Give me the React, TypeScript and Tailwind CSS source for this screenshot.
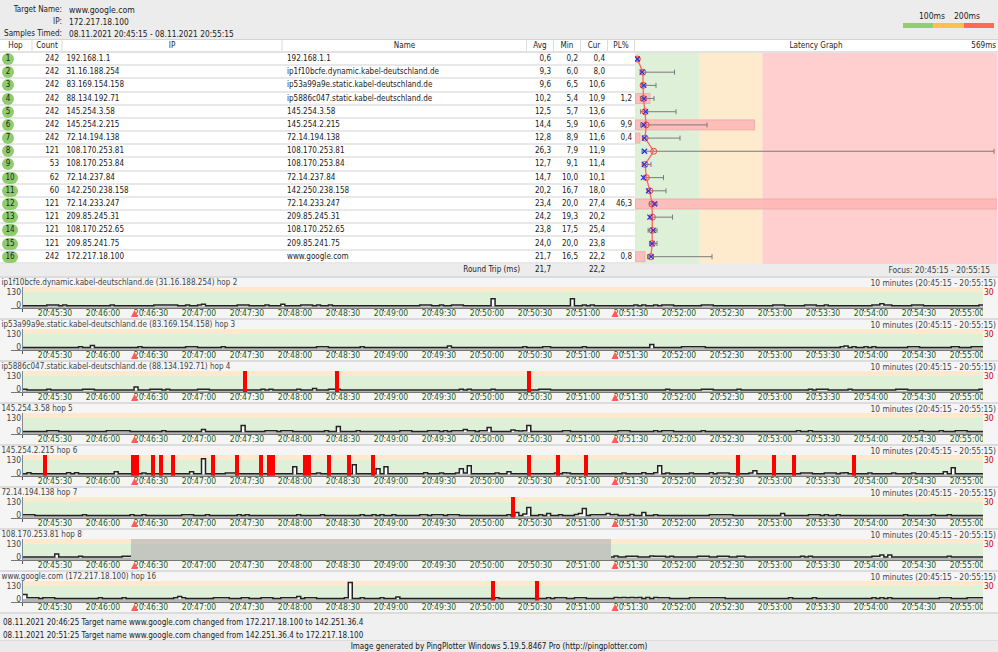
import React from "react";

const hops = [
  [1, 242, "192.168.1.1", "192.168.1.1", "0,6", "0,2", "0,4", "", 0.6, 0.2, 0.4, 639, 0],
  [2, 242, "31.16.188.254", "ip1f10bcfe.dynamic.kabel-deutschland.de", "9,3", "6,0", "8,0", "", 9.3, 6.0, 8.0, 674.5, 0],
  [3, 242, "83.169.154.158", "ip53a99a9e.static.kabel-deutschland.de", "9,6", "6,5", "10,6", "", 9.6, 6.5, 10.6, 656, 0],
  [4, 242, "88.134.192.71", "ip5886c047.static.kabel-deutschland.de", "10,2", "5,4", "10,9", "1,2", 10.2, 5.4, 10.9, 654, 650],
  [5, 242, "145.254.3.58", "145.254.3.58", "12,5", "5,7", "13,6", "", 12.5, 5.7, 13.6, 676, 0],
  [6, 242, "145.254.2.215", "145.254.2.215", "14,4", "5,9", "10,6", "9,9", 14.4, 5.9, 10.6, 707, 754.5],
  [7, 242, "72.14.194.138", "72.14.194.138", "12,8", "8,9", "11,6", "0,4", 12.8, 8.9, 11.6, 680, 640],
  [8, 121, "108.170.253.81", "108.170.253.81", "26,3", "7,9", "11,9", "", 26.3, 7.9, 11.9, 994, 0],
  [9, 53, "108.170.253.84", "108.170.253.84", "12,7", "9,1", "11,4", "", 12.7, 9.1, 11.4, 651, 0],
  [10, 62, "72.14.237.84", "72.14.237.84", "14,7", "10,0", "10,1", "", 14.7, 10.0, 10.1, 663.5, 0],
  [11, 60, "142.250.238.158", "142.250.238.158", "20,2", "16,7", "18,0", "", 20.2, 16.7, 18.0, 666, 0],
  [12, 121, "72.14.233.247", "72.14.233.247", "23,4", "20,0", "27,4", "46,3", 23.4, 20.0, 27.4, 657, 997],
  [13, 121, "209.85.245.31", "209.85.245.31", "24,2", "19,3", "20,2", "", 24.2, 19.3, 20.2, 672.5, 0],
  [14, 121, "108.170.252.65", "108.170.252.65", "23,8", "17,5", "25,4", "", 23.8, 17.5, 25.4, 657, 0],
  [15, 121, "209.85.241.75", "209.85.241.75", "24,0", "20,0", "23,8", "", 24.0, 20.0, 23.8, 657, 0],
  [16, 242, "172.217.18.100", "www.google.com", "21,7", "16,5", "22,2", "0,8", 21.7, 16.5, 22.2, 712, 645],
] as const;

const ROW = 13.18;
const sx = (ms: number) => 2 + ms * 0.636;

function LatencyGraph() {
  const pts = hops.map((h, i) => `${sx(h[8])},${6 + i * ROW}`).join(" ");
  return (
    <svg width="362" height="211" className="block shrink-0">
      <rect x="0" y="0" width="64" height="211" fill="#dff0d8" />
      <rect x="64" y="0" width="63.5" height="211" fill="#feeacc" />
      <rect x="127.5" y="0" width="234.5" height="211" fill="#ffcfcf" />
      {hops.map((h, i) =>
        h[12] ? (
          <rect key={i} x="0.5" y={i * ROW + 1} width={h[12] - 635.5} height="10" fill="#ffb6b6" fillOpacity="0.88" stroke="#eaa9a9" strokeOpacity="0.8" strokeWidth="1" />
        ) : null,
      )}
      {hops.map((h, i) => {
        const y = 6 + i * ROW;
        const min = sx(h[9]);
        const max = h[11] - 635;
        return (
          <g key={i} stroke="#7a7a7a" strokeWidth="1">
            <line x1={min} x2={max} y1={y} y2={y} />
            <line x1={min} x2={min} y1={y - 2.5} y2={y + 2.5} />
            <line x1={max} x2={max} y1={y - 2.5} y2={y + 2.5} />
          </g>
        );
      })}
      <polyline points={pts} fill="none" stroke="#ff6464" strokeWidth="1.3" />
      {hops.map((h, i) => {
        const y = 6 + i * ROW;
        const c = sx(h[10]);
        return (
          <g key={i} fill="none">
            <circle cx={sx(h[8])} cy={y} r="3" stroke="#f04545" strokeWidth="1" />
            <path d={`M${c - 2.5} ${y - 2.5}L${c + 2.5} ${y + 2.5}M${c - 2.5} ${y + 2.5}L${c + 2.5} ${y - 2.5}`} stroke="#2a2ae0" strokeWidth="1.1" />
          </g>
        );
      })}
    </svg>
  );
}

type ChartDef = {
  hop: number;
  title: string;
  base: number;
  red: [number, number][];
  bumps: [number, number][];
  gray?: boolean;
};

const r = (c: number): [number, number] => [c - 2, c + 2];

const charts: ChartDef[] = [
  { hop: 2, title: "ip1f10bcfe.dynamic.kabel-deutschland.de (31.16.188.254) hop 2", base: 18.7, red: [], bumps: [[493, 7], [574, 7], [205, 1.5], [281, 1.5], [882, 2]] },
  { hop: 3, title: "ip53a99a9e.static.kabel-deutschland.de (83.169.154.158) hop 3", base: 18.5, red: [], bumps: [[93, 2], [650, 3], [449, 1.5], [848, 1.5]] },
  { hop: 4, title: "ip5886c047.static.kabel-deutschland.de (88.134.192.71) hop 4", base: 19, red: [r(245), r(337), r(529)], bumps: [[137, 3], [316, 1.5]] },
  { hop: 5, title: "145.254.3.58 hop 5", base: 18.5, red: [], bumps: [[245, 6], [337, 5], [205, 2], [465, 2], [489, 4], [513, 1.5], [529, 6], [521, 0.6]] },
  {
    hop: 6,
    title: "145.254.2.215 hop 6",
    base: 18.7,
    red: [r(45), [131, 139], r(153), r(161), r(173), r(213), r(237), r(261), [267, 275], [303, 311], r(329), r(349), r(373), r(529), r(558), r(586), r(738), r(774), r(794), r(854)],
    bumps: [[117, 2], [28, 1], [68, 1], [77, 1], [193, 2], [203, 15], [293, 7], [353, 9], [377, 5], [385, 7], [461, 5], [470, 8], [425, 1], [509, 2], [565, 1], [642, 1], [655, 1], [661, 8], [710, 1], [753, 3], [845, 1], [945, 2], [954, 6]],
  },
  { hop: 7, title: "72.14.194.138 hop 7", base: 18.5, red: [r(513)], bumps: [[517, 3], [525, 1.5], [529, 8], [549, 2], [575, 1], [580, 2], [586, 7], [609, 2], [617, 1], [633, 1], [645, 3], [784, 2]] },
  { hop: 8, title: "108.170.253.81 hop 8", base: 18, red: [], bumps: [[57, 3], [618, 1], [650, 1], [890, 2], [880, 2]], gray: true },
  { hop: 16, title: "www.google.com (172.217.18.100) hop 16", base: 17.5, red: [r(493), r(537)], bumps: [[25, 4], [349, 16], [180, 2], [297, 2], [396, 1.5], [617, 1], [625, 1], [633, 1], [641, 1], [649, 1], [657, 1]] },
];

const STEP = 960 / 242;

function tracePath(c: ChartDef) {
  const v: number[] = [];
  let s = c.hop * 7919 + 13;
  let run = 0;
  for (let i = 0; i < 242; i++) {
    s = (s * 1103515245 + 12345) & 0x7fffffff;
    if (run > 0) {
      v.push(0.8);
      run--;
    } else if ((s >> 8) % 100 < 13) {
      v.push(0.8);
      run = (s >> 16) % 3 === 0 ? 2 : 0;
    } else {
      v.push(0);
    }
  }
  c.bumps.forEach(([x, h]) => {
    v[Math.floor((x - 23) / STEP)] = h;
  });
  let d = `M0 ${c.base - v[0]}`;
  v.forEach((h, i) => {
    const y = c.base - h;
    d += `V${y}H${((i + 1) * STEP).toFixed(2)}`;
  });
  return d;
}

const labels: string[] = [];
for (let m = 45; m <= 55; m++) {
  if (m > 45) labels.push(`20:${m}:00`);
  if (m < 55) labels.push(`20:${m}:30`);
}

function Chart({ c }: { c: ChartDef }) {
  const d = tracePath(c);
  return (
    <div className="h-[42px] box-border border-b-2 border-[#dcdcdc] bg-[#f5f5f5] text-[#444]">
      <div className="flex h-[9px] justify-between pl-[1.5px] pr-[2px] leading-[10px]">
        <span>{c.title}</span>
        <span className="text-[8.35px]">10 minutes (20:45:15 - 20:55:15)</span>
      </div>
      <div className="flex h-[22px]">
        <div className="w-[23px] pr-[2px] text-right text-[8.5px]">
          <div className="h-[10px] leading-[10px]">130</div>
          <div className="mt-[3px] h-[10px] leading-[10px]">0</div>
        </div>
        <svg width="960" height="22" className="block shrink-0 overflow-visible">
          <rect x="0" y="0" width="960" height="5" fill="#fee9cf" />
          <rect x="0" y="5" width="960" height="17" fill="#dff0d8" />
          <path d={`${d}V${c.base + 1}H0Z`} fill="#fdfdfd" />
          <rect x="0" y={c.base + 0.5} width="960" height={21 - c.base - 0.5} fill="#b5b5b5" />
          <path d={d} fill="none" stroke="#222" strokeWidth="1.5" />
          {c.red.map(([a, b], i) => (
            <rect key={i} x={a - 23} y="0" width={b - a} height={c.base + 2} fill="#ff0000" />
          ))}
          {c.gray && (
            <>
              <rect x="108" y="0" width="480" height="5" fill="#cfc8bf" />
              <rect x="108" y="5" width="480" height="16.5" fill="#c4c7bf" />
            </>
          )}
          <line x1="-12" x2="960" y1="21.5" y2="21.5" stroke="#777" strokeWidth="1" />
          <line x1="-0.5" x2="-0.5" y1="0" y2="22" stroke="#888" strokeWidth="1" />
        </svg>
        <div className="pl-[1px] text-[8.5px] leading-[10px] text-[#cc0000]">30</div>
      </div>
      <div className="relative flex h-[9px] w-[983px] overflow-hidden pl-[31px] text-[8.55px] leading-[9px] text-[#225f22]">
        {labels.map((l) => (
          <span key={l} className="w-[48px] shrink-0 text-center">
            {l}
          </span>
        ))}
        <svg width="983" height="9" className="absolute left-0 top-0">
          <line x1="22.5" x2="22.5" y1="0" y2="3" stroke="#555" />
          {labels.map((l, i) => (
            <line key={l} x1={47.5 + i * 48} x2={47.5 + i * 48} y1="0" y2="2" stroke="#555" />
          ))}
          <path d="M134.5 1L138 8H131Z" fill="#ff5a5a" />
          <path d="M615 1L618.5 8H611.5Z" fill="#ff5a5a" />
        </svg>
      </div>
    </div>
  );
}

export default function App() {
  return (
    <div className="h-[652px] w-[998px] overflow-hidden bg-[#ececec] font-['DejaVu_Sans_Condensed','DejaVu_Sans',sans-serif] text-[8.05px] leading-[12px] text-[#222]">
      <div className="flex h-[40px] box-border justify-between border-b border-[#d4d4d4] pt-[4px]">
        <div className="grid grid-cols-[62px_auto] content-start gap-x-[7px]">
          <span className="text-right">Target Name:</span>
          <span className="text-[8.6px]">www.google.com</span>
          <span className="text-right">IP:</span>
          <span className="text-[8.4px]">172.217.18.100</span>
          <span className="text-right">Samples Timed:</span>
          <span className="text-[8.3px]">08.11.2021 20:45:15 - 08.11.2021 20:55:15</span>
        </div>
        <div className="mr-[4px] mt-[6px] w-[91px]">
          <div className="flex h-[13px] justify-center gap-[9px] pl-[2px] text-[8.5px]">
            <span>100ms</span>
            <span>200ms</span>
          </div>
          <div className="flex h-[5px]">
            <div className="w-[30px] bg-[#92cd6e]" />
            <div className="w-[31px] bg-[#ffbf4d]" />
            <div className="w-[30px] bg-[#ff6a50]" />
          </div>
        </div>
      </div>
      <div className="flex h-[13px] box-border border-b-2 border-[#e2e2e2] bg-white text-center">
        <div className="w-[33px] border-r-2 border-[#ececec]">Hop</div>
        <div className="w-[30px] border-r-2 border-[#ececec]">Count</div>
        <div className="w-[220px] border-r-2 border-[#ececec]">IP</div>
        <div className="w-[244px] border-r border-[#dcdcdc]">Name</div>
        <div className="w-[27px] border-r border-[#dcdcdc]">Avg</div>
        <div className="w-[27px] border-r border-[#dcdcdc]">Min</div>
        <div className="w-[27px] border-r border-[#dcdcdc]">Cur</div>
        <div className="w-[27px] border-r border-[#dcdcdc]">PL%</div>
        <div className="relative w-[362px]">
          Latency Graph
          <span className="absolute right-[1px] top-0">569ms</span>
        </div>
      </div>
      <div className="flex h-[211px]">
        <div className="w-[635px] shrink-0 bg-white">
          {hops.map((h) => (
            <div key={h[0]} className="flex h-[13.18px] box-border items-center border-b-2 border-[#e8e8e8] pt-[1px]">
              <div className="w-[33px] pl-[2px]">
                <div className={`flex h-[12px] items-center justify-center rounded-full bg-[#8fcc6e] ${h[0] > 9 ? "w-[16px]" : "w-[12px]"}`}>{h[0]}</div>
              </div>
              <div className="w-[26px] text-right">{h[1]}</div>
              <div className="w-[228px] pl-[7.5px]">{h[2]}</div>
              <div className="w-[240px]">{h[3]}</div>
              <div className="w-[24px] text-right">{h[4]}</div>
              <div className="w-[27px] text-right">{h[5]}</div>
              <div className="w-[27px] text-right">{h[6]}</div>
              <div className="w-[27px] text-right">{h[7]}</div>
            </div>
          ))}
        </div>
        <LatencyGraph />
      </div>
      <div className="flex h-[12px] bg-[#ececec]">
        <div className="w-[520px] text-right">Round Trip (ms)</div>
        <div className="w-[31px] text-right">21,7</div>
        <div className="w-[54px] text-right">22,2</div>
        <div className="flex-1 pr-[8px] text-right text-[8.4px] text-[#444]">Focus: 20:45:15 - 20:55:15</div>
      </div>
      <div className="h-[2px] bg-[#dcdcdc]" />
      {charts.map((c) => (
        <Chart key={c.hop} c={c} />
      ))}
      <div className="h-[26px] bg-[#f0f0f0] pl-[3px] pt-[2px]">
        <div className="h-[13px] leading-[13px]">08.11.2021 20:46:25 Target name www.google.com changed from 172.217.18.100 to 142.251.36.4</div>
        <div className="h-[11px] leading-[13px]">08.11.2021 20:51:25 Target name www.google.com changed from 142.251.36.4 to 172.217.18.100</div>
      </div>
      <div className="h-[12px] border-t border-[#dcdcdc] bg-[#ebebeb] text-center leading-[12px] text-[#111]">
        Image generated by PingPlotter Windows 5.19.5.8467 Pro (http://pingplotter.com)
      </div>
    </div>
  );
}
